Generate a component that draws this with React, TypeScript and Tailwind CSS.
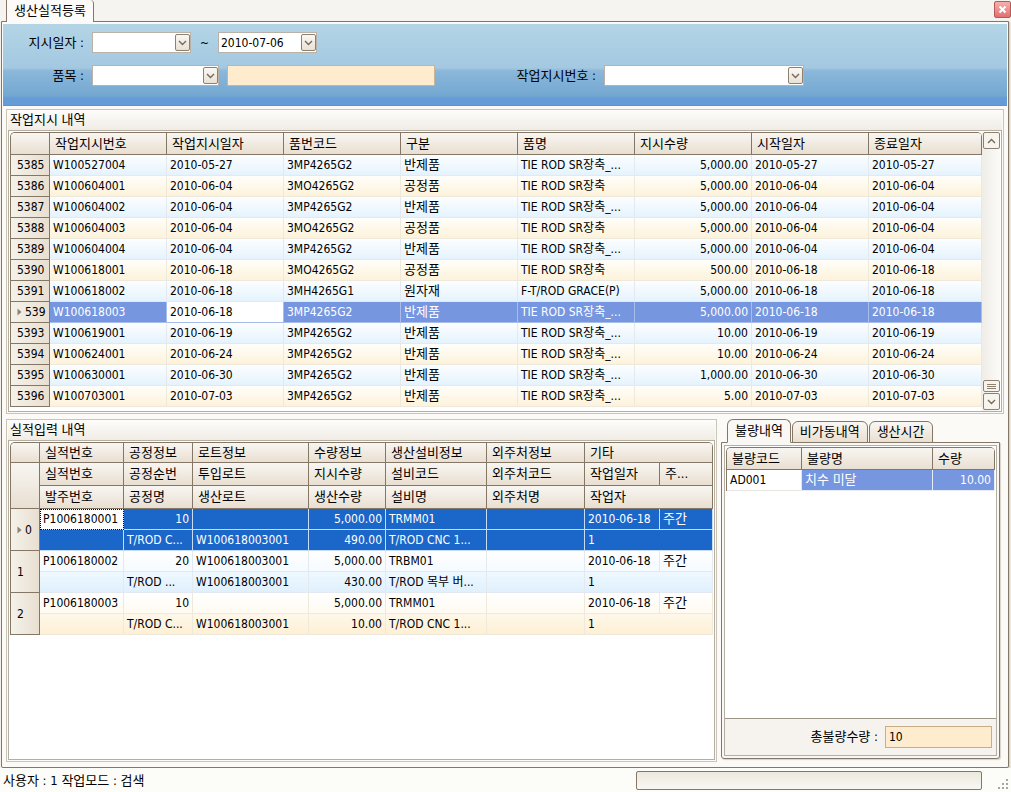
import { Fragment, useState } from "react";
import type { ReactNode } from "react";
import clsx from "clsx";

type Order = {
  no: string;
  orderNo: string;
  date: string;
  code: string;
  kind: string;
  name: string;
  qty: string;
};

const orders: Order[] = [
  { no: "5385", orderNo: "W100527004", date: "2010-05-27", code: "3MP4265G2", kind: "반제품", name: "TIE ROD SR장축_...", qty: "5,000.00" },
  { no: "5386", orderNo: "W100604001", date: "2010-06-04", code: "3MO4265G2", kind: "공정품", name: "TIE ROD SR장축", qty: "5,000.00" },
  { no: "5387", orderNo: "W100604002", date: "2010-06-04", code: "3MP4265G2", kind: "반제품", name: "TIE ROD SR장축_...", qty: "5,000.00" },
  { no: "5388", orderNo: "W100604003", date: "2010-06-04", code: "3MO4265G2", kind: "공정품", name: "TIE ROD SR장축", qty: "5,000.00" },
  { no: "5389", orderNo: "W100604004", date: "2010-06-04", code: "3MP4265G2", kind: "반제품", name: "TIE ROD SR장축_...", qty: "5,000.00" },
  { no: "5390", orderNo: "W100618001", date: "2010-06-18", code: "3MO4265G2", kind: "공정품", name: "TIE ROD SR장축", qty: "500.00" },
  { no: "5391", orderNo: "W100618002", date: "2010-06-18", code: "3MH4265G1", kind: "원자재", name: "F-T/ROD GRACE(P)", qty: "5,000.00" },
  { no: "5392", orderNo: "W100618003", date: "2010-06-18", code: "3MP4265G2", kind: "반제품", name: "TIE ROD SR장축_...", qty: "5,000.00" },
  { no: "5393", orderNo: "W100619001", date: "2010-06-19", code: "3MP4265G2", kind: "반제품", name: "TIE ROD SR장축_...", qty: "10.00" },
  { no: "5394", orderNo: "W100624001", date: "2010-06-24", code: "3MP4265G2", kind: "반제품", name: "TIE ROD SR장축_...", qty: "10.00" },
  { no: "5395", orderNo: "W100630001", date: "2010-06-30", code: "3MP4265G2", kind: "반제품", name: "TIE ROD SR장축_...", qty: "1,000.00" },
  { no: "5396", orderNo: "W100703001", date: "2010-07-03", code: "3MP4265G2", kind: "반제품", name: "TIE ROD SR장축_...", qty: "5.00" },
];

const results = [
  { id: "P1006180001", seq: "10", process: "T/ROD C...", lotIn: "", lotOut: "W100618003001", qty: "5,000.00", made: "490.00", machine: "TRMM01", machineName: "T/ROD CNC 1...", date: "2010-06-18", shift: "주간", worker: "1" },
  { id: "P1006180002", seq: "20", process: "T/ROD ...", lotIn: "W100618003001", lotOut: "W100618003001", qty: "5,000.00", made: "430.00", machine: "TRBM01", machineName: "T/ROD 목부 버...", date: "2010-06-18", shift: "주간", worker: "1" },
  { id: "P1006180003", seq: "10", process: "T/ROD C...", lotIn: "", lotOut: "W100618003001", qty: "5,000.00", made: "10.00", machine: "TRMM01", machineName: "T/ROD CNC 1...", date: "2010-06-18", shift: "주간", worker: "1" },
];

const orderColumns = ["작업지시번호", "작업지시일자", "품번코드", "구분", "품명", "지시수량", "시작일자", "종료일자"];

const headCell =
  "border-r border-b border-[#857766] px-[5px] text-left text-[13px] leading-4 font-normal whitespace-nowrap overflow-hidden bg-linear-to-b from-[#f8f6f2] to-[#e9dfd1]";
const indexCell =
  "border-r border-b border-[#857766] p-0 text-left font-normal bg-linear-to-r from-[#f5f2ea] to-[#e8dfd1]";
const bodyCell = "h-[21px] px-[3px] border-r border-b whitespace-nowrap overflow-hidden";

function Chevron({ up = false }: { up?: boolean }) {
  return (
    <svg width="9" height="6" viewBox="0 0 9 6" fill="none" stroke="#75695c" strokeWidth="1.4" aria-hidden="true">
      <path d={up ? "M1 5L4.5 1.5L8 5" : "M1 1L4.5 4.5L8 1"} />
    </svg>
  );
}

function Marker() {
  return (
    <svg width="5" height="8" viewBox="0 0 5 8" fill="#8d8274" aria-hidden="true">
      <path d="M0.5 0.5L4.5 4L0.5 7.5Z" />
    </svg>
  );
}

function Combo({ id, label, value, className }: { id: string; label: string; value?: string; className: string }) {
  return (
    <div className={clsx("relative h-[21px]", className)}>
      <select
        id={id}
        aria-label={label}
        className="block h-full w-full appearance-none border border-[#b9b2a8] bg-white pr-5 pl-[2px] text-xs text-black outline-none"
      >
        <option>{value ?? ""}</option>
      </select>
      <span className="pointer-events-none absolute top-[2px] right-[1px] flex h-[17px] w-[15px] items-center justify-center rounded-[2px] border border-[#8f8170] bg-linear-to-b from-[#faf8f4] to-[#e9e1d4]">
        <Chevron />
      </span>
    </div>
  );
}

function Group({ title, className, children }: { title: string; className?: string; children: ReactNode }) {
  return (
    <section className={clsx("flex min-w-0 flex-col border border-[#c9c6b8] px-px pb-px", className)}>
      <h2 className="h-5 bg-linear-to-b from-[#fefdfc] to-[#f0ece5] pl-[2px] text-[13px] leading-5">{title}</h2>
      {children}
    </section>
  );
}

function OrderGrid() {
  const [selected, setSelected] = useState("5392");
  return (
    <div className="flex border border-[#b5aea3] bg-white px-px pt-px">
      <table className="mb-1 w-full table-fixed border-separate border-spacing-0 overflow-hidden rounded-t-[5px] border-t border-l border-[#857766]">
        <colgroup>
          <col className="w-[39px]" />
          {orderColumns.map((c, i) => (
            <col key={c} className={i < 7 ? "w-[117px]" : ""} />
          ))}
        </colgroup>
        <thead>
          <tr>
            <th className={clsx(headCell, "h-[22px]")} />
            {orderColumns.map((c) => (
              <th key={c} className={clsx(headCell, "h-[22px]")}>{c}</th>
            ))}
          </tr>
        </thead>
        <tbody>
          {orders.map((o, i) => {
            const on = o.no === selected;
            const cell = clsx(
              bodyCell,
              on ? "border-[#a9bdec] bg-[#7796e0] text-white" : i % 2 ? "border-[#eee9db]" : "border-[#e3e9ee]"
            );
            return (
              <tr
                key={o.no}
                onClick={() => setSelected(o.no)}
                className={clsx(
                  i % 2
                    ? "bg-linear-to-b from-[#fffefa] to-[#fdf2d9]"
                    : "bg-linear-to-b from-[#fcfeff] to-[#e4f2fd]"
                )}
              >
                <th className={indexCell}>
                  <div className="flex items-center gap-[3px] pl-[6px]">
                    {on && <Marker />}
                    {/* the marker takes the room of the last digit */}
                    {on ? o.no.slice(0, 3) : o.no}
                  </div>
                </th>
                <td className={cell}>{o.orderNo}</td>
                <td className={clsx(cell, on && "bg-white! text-black!")}>{o.date}</td>
                <td className={cell}>{o.code}</td>
                <td className={clsx(cell, "text-[13px]")}>{o.kind}</td>
                <td className={cell}>{o.name}</td>
                <td className={clsx(cell, "text-right")}>{o.qty}</td>
                <td className={cell}>{o.date}</td>
                <td className={cell}>{o.date}</td>
              </tr>
            );
          })}
        </tbody>
      </table>
      <div className="flex w-[18px] shrink-0 flex-col items-center gap-px bg-linear-to-r from-[#f0ede7] to-[#fbfaf8] pb-px">
        <button aria-label="위로" className="flex h-[17px] w-[17px] items-center justify-center rounded-[2px] border border-[#8f8170] bg-[#f7f4ee]">
          <Chevron up />
        </button>
        <div className="flex-1" />
        <button aria-label="스크롤" className="flex h-3 w-[17px] flex-col items-center justify-center gap-px rounded-[2px] border border-[#8f8170] bg-[#f7f4ee]">
          <span className="h-px w-[9px] bg-[#8f8170]" />
          <span className="h-px w-[9px] bg-[#8f8170]" />
          <span className="h-px w-[9px] bg-[#8f8170]" />
        </button>
        <button aria-label="아래로" className="flex h-[17px] w-[17px] items-center justify-center rounded-[2px] border border-[#8f8170] bg-[#f7f4ee]">
          <Chevron />
        </button>
      </div>
    </div>
  );
}

function ResultGrid() {
  const [selected, setSelected] = useState(0);
  return (
    <div className="flex-1 border border-[#b5aea3] bg-white px-px pt-px">
      <table className="w-full table-fixed border-separate border-spacing-0 overflow-hidden rounded-t-[5px] border-t border-l border-[#857766]">
        <colgroup>
          <col className="w-[29px]" />
          <col className="w-[84px]" />
          <col className="w-[69px]" />
          <col className="w-[116px]" />
          <col className="w-[77px]" />
          <col className="w-[101px]" />
          <col className="w-[98px]" />
          <col className="w-[75px]" />
          <col />
        </colgroup>
        <thead>
          <tr className="h-5">
            <th className={headCell} />
            {["실적번호", "공정정보", "로트정보", "수량정보", "생산설비정보", "외주처정보"].map((t) => (
              <th key={t} className={headCell}>{t}</th>
            ))}
            <th colSpan={2} className={headCell}>기타</th>
          </tr>
          <tr className="h-[23px]">
            <th rowSpan={2} className={headCell} />
            {["실적번호", "공정순번", "투입로트", "지시수량", "설비코드", "외주처코드", "작업일자", "주..."].map((t) => (
              <th key={t} className={headCell}>{t}</th>
            ))}
          </tr>
          <tr className="h-[23px]">
            {["발주번호", "공정명", "생산로트", "생산수량", "설비명", "외주처명"].map((t) => (
              <th key={t} className={headCell}>{t}</th>
            ))}
            <th colSpan={2} className={headCell}>작업자</th>
          </tr>
        </thead>
        <tbody>
          {results.map((r, i) => {
            const on = i === selected;
            const cell = clsx(
              bodyCell,
              on ? "border-[#c6dcf7] bg-[#1b66c9] text-white" : i % 2 ? "border-[#e3e9ee]" : "border-[#eee9db]"
            );
            return (
              <Fragment key={r.id}>
                <tr
                  onClick={() => setSelected(i)}
                  className={i % 2 ? "bg-linear-to-b from-white to-[#f4faff]" : "bg-linear-to-b from-white to-[#fefaf0]"}
                >
                  <th rowSpan={2} className={indexCell}>
                    <div className="flex items-center gap-[3px] pl-[6px]">
                      {on && <Marker />}
                      {i}
                    </div>
                  </th>
                  <td className={clsx(cell, on && "bg-white! text-black! outline outline-dotted -outline-offset-1 outline-black")}>{r.id}</td>
                  <td className={clsx(cell, "text-right")}>{r.seq}</td>
                  <td className={cell}>{r.lotIn}</td>
                  <td className={clsx(cell, "text-right")}>{r.qty}</td>
                  <td className={cell}>{r.machine}</td>
                  <td className={cell} />
                  <td className={cell}>{r.date}</td>
                  <td className={clsx(cell, "text-[13px]")}>{r.shift}</td>
                </tr>
                <tr
                  onClick={() => setSelected(i)}
                  className={i % 2 ? "bg-linear-to-b from-[#eff8ff] to-[#def0fd]" : "bg-linear-to-b from-[#fef8ea] to-[#fdefd2]"}
                >
                  <td className={cell} />
                  <td className={cell}>{r.process}</td>
                  <td className={cell}>{r.lotOut}</td>
                  <td className={clsx(cell, "text-right")}>{r.made}</td>
                  <td className={cell}>{r.machineName}</td>
                  <td className={cell} />
                  <td colSpan={2} className={cell}>{r.worker}</td>
                </tr>
              </Fragment>
            );
          })}
        </tbody>
      </table>
    </div>
  );
}

function DefectPanel() {
  const [tab, setTab] = useState("불량내역");
  return (
    <div className="mr-1 mb-[3px] ml-1 flex w-[279px] shrink-0 flex-col">
      <div role="tablist" className="relative -mb-px flex h-6 items-end gap-px pl-[6px]">
        {["불량내역", "비가동내역", "생산시간"].map((t) => (
          <button
            key={t}
            role="tab"
            aria-selected={t === tab}
            onClick={() => setTab(t)}
            className={clsx(
              "rounded-t-[6px] border border-[#857766] px-[7px] text-[13px]",
              t === tab ? "h-6 border-b-[#faf8f5] bg-[#faf8f5]" : "h-[22px] bg-linear-to-b from-[#f9f7f3] to-[#e9dfd1]"
            )}
          >
            {t}
          </button>
        ))}
      </div>
      <div className="flex flex-1 flex-col rounded-b-[3px] border border-[#857766] bg-[#faf8f5] p-[2px] shadow-[1px_1px_1px_#d8d2c6]">
        <div className="flex flex-1 flex-col border border-[#b5aea3]">
          <div className="flex-1 border-b border-[#9d9488] bg-white px-px pt-px">
            <table className="w-full table-fixed border-separate border-spacing-0 overflow-hidden rounded-t-[5px] border-t border-l border-[#857766]">
              <colgroup>
                <col className="w-[75px]" />
                <col className="w-[131px]" />
                <col />
              </colgroup>
              <thead>
                <tr className="h-[22px]">
                  {["불량코드", "불량명", "수량"].map((t) => (
                    <th key={t} className={headCell}>{t}</th>
                  ))}
                </tr>
              </thead>
              <tbody>
                <tr>
                  <td className={clsx(bodyCell, "border-[#e9e6df]")}>AD001</td>
                  <td className={clsx(bodyCell, "border-[#e6ecf8] bg-[#7796e0] text-[13px] text-white")}>치수 미달</td>
                  <td className={clsx(bodyCell, "border-[#e6ecf8] bg-[#7796e0] text-right text-white")}>10.00</td>
                </tr>
              </tbody>
            </table>
          </div>
          <div className="flex h-9 items-center justify-end gap-[7px] bg-[#f6f3ef] pr-1">
            <label htmlFor="defect-total" className="text-[13px]">총불량수량 :</label>
            <input
              id="defect-total"
              readOnly
              defaultValue="10"
              className="h-[22px] w-[107px] border border-[#c9ad88] bg-[#ffebcd] px-[3px] text-xs outline-none"
            />
          </div>
        </div>
      </div>
    </div>
  );
}

export default function App() {
  return (
    <div className="flex min-h-screen flex-col overflow-hidden bg-[#f6f4f0] font-['DejaVu_Sans_Condensed','DejaVu_Sans','Noto_Sans_CJK_KR',sans-serif] text-xs leading-4 text-black">
      <header className="relative flex h-[21px] items-start justify-between pl-[6px]">
        <div role="tablist" className="z-10">
          <button role="tab" aria-selected="true" className="h-[22px] w-[88px] rounded-tr-[4px] border-x border-[#857766] bg-[#fcfbf9] text-[13px]">
            생산실적등록
          </button>
        </div>
        <button aria-label="닫기" className="mt-px flex h-[17px] w-[17px] items-center justify-center rounded-[2px] border border-[#b65a58] bg-linear-to-b from-[#f5b0ae] to-[#e46f70]">
          <svg width="9" height="9" viewBox="0 0 9 9" stroke="#fff" strokeWidth="2" aria-hidden="true">
            <path d="M1.5 1.5L7.5 7.5M7.5 1.5L1.5 7.5" />
          </svg>
        </button>
      </header>

      <main className="mr-[2px] ml-px flex flex-1 flex-col rounded-b-[2px] border border-[#857766] bg-[#fcfaf7] pt-[2px] pr-px pb-[5px] pl-px shadow-[1px_1px_2px_#cfc8b6]">
        <form className="flex h-[82px] flex-col gap-3 border-b border-[#6790bd] bg-[linear-gradient(to_bottom,#b4d5e6_0%,#a3c8e0_54%,#8bb7da_58%,#74a8d1_88%,#659bd6_92%,#659bd6_100%)] pt-2">
          <div className="flex items-center gap-2">
            <label htmlFor="date-from" className="w-[81px] text-right text-[13px]">지시일자 :</label>
            <Combo id="date-from" label="지시일자 시작" className="w-[99px]" />
            <span className="w-[11px] text-center">~</span>
            <Combo id="date-to" label="지시일자 종료" value="2010-07-06" className="w-[99px]" />
          </div>
          <div className="flex items-center gap-2">
            <label htmlFor="item" className="w-[81px] text-right text-[13px]">품목 :</label>
            <Combo id="item" label="품목" className="w-[127px]" />
            <input aria-label="품목명" readOnly className="h-[21px] w-[208px] border border-[#c9b592] bg-[#ffebcd] px-[3px] text-xs outline-none" />
            <label htmlFor="order-no" className="w-[153px] text-right text-[13px]">작업지시번호 :</label>
            <Combo id="order-no" label="작업지시번호" className="w-[200px]" />
          </div>
        </form>

        <div className="flex flex-1 flex-col gap-[5px] px-[3px] pt-[3px]">
          <Group title="작업지시 내역">
            <OrderGrid />
          </Group>
          <div className="flex flex-1">
            <Group title="실적입력 내역" className="flex-1">
              <ResultGrid />
            </Group>
            <DefectPanel />
          </div>
        </div>
      </main>

      <footer className="flex h-6 items-center justify-between bg-[#fcfcf8] pl-[3px] text-[13px]">
        <span className="pt-[2px]">사용자 : 1 작업모드 : 검색</span>
        <div className="flex h-full items-center">
          <div className="mr-4 h-[19px] w-[346px] rounded-[2px] border border-[#857766] bg-linear-to-b from-[#ece8dd] to-[#f9f7f2]" />
          <svg width="13" height="13" viewBox="0 0 13 13" fill="#aaa69e" className="mt-2" aria-hidden="true">
            <path d="M8 1h2v2H8zM8 5h2v2H8zM8 9h2v2H8zM4 5h2v2H4zM4 9h2v2H4zM0 9h2v2H0z" />
          </svg>
        </div>
      </footer>
    </div>
  );
}
